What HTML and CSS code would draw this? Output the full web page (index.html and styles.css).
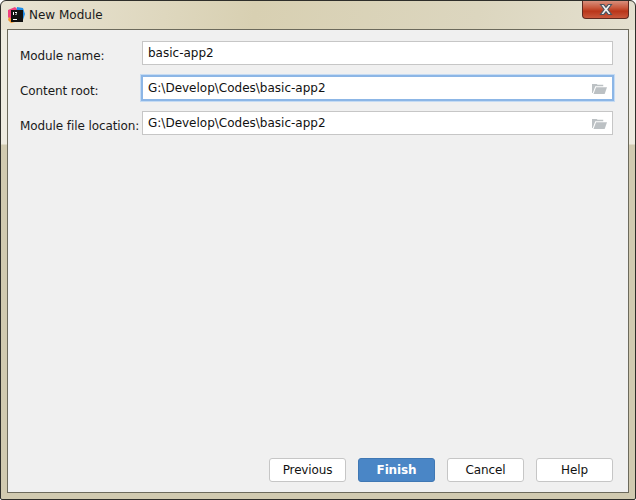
FILE: index.html
```html
<!DOCTYPE html>
<html>
<head>
  <title>New Module</title>
  <link rel="stylesheet" href="styles.css">
</head>
<body>
  <div class="window">
    <div class="titlebar">
      <svg class="app-icon" width="17" height="16" viewBox="0 0 17 16">
        <path d="M0 3 L7 0 L10 3 L3 15 L0 10 Z" fill="#f0407e"/>
        <path d="M9 0 L15 1 L17 7 L15 13 L8 8 Z" fill="#1f8ce8"/>
        <path d="M1 10 L7 15 L3 16 L0 13 Z" fill="#f59a2c"/>
        <rect x="3" y="3" width="12" height="12" fill="#111"/>
        <path d="M5 5 H6 V8 H5 Z M7 5 H9 V6 H8.5 V8 H7 V7.4 H8 V6 H7 Z" fill="#fff"/>
        <rect x="5" y="12" width="4" height="1" fill="#fff"/>
      </svg>
      <span class="title-text">New Module</span>
      <div class="close-btn">
        <svg width="14" height="11" viewBox="1 0.5 12 10">
          <path d="M2 1 L5 1 L7 3.5 L9 1 L12 1 L8.7 5.5 L12 10 L9 10 L7 7.5 L5 10 L2 10 L5.3 5.5 Z" fill="#f2f2f2" stroke="#4a5560" stroke-width="1"/>
        </svg>
      </div>
    </div>
    <div class="panel">
      <div class="form">
        <label class="form-label">Module name:</label>
        <div class="field"><span>basic-app2</span></div>

        <label class="form-label">Content root:</label>
        <div class="field focused">
          <span>G:\Develop\Codes\basic-app2</span>
          <svg class="folder" width="15" height="11" viewBox="0 0 16 12" preserveAspectRatio="none">
            <path d="M0 1 H5 L6 2 H12 V3.5 H3.5 L0.8 11 H0 Z" fill="#bcc1c4"/>
            <path d="M4.3 4.5 H16 L13.5 12 H1.6 Z" fill="#bcc1c4"/>
          </svg>
        </div>

        <label class="form-label">Module file location:</label>
        <div class="field">
          <span>G:\Develop\Codes\basic-app2</span>
          <svg class="folder" width="15" height="11" viewBox="0 0 16 12" preserveAspectRatio="none">
            <path d="M0 1 H5 L6 2 H12 V3.5 H3.5 L0.8 11 H0 Z" fill="#bcc1c4"/>
            <path d="M4.3 4.5 H16 L13.5 12 H1.6 Z" fill="#bcc1c4"/>
          </svg>
        </div>
      </div>

      <div class="buttons">
        <button class="btn">Previous</button>
        <button class="btn primary">Finish</button>
        <button class="btn">Cancel</button>
        <button class="btn">Help</button>
      </div>
    </div>
  </div>
</body>
</html>
```

FILE: styles.css
```css
html, body {
  margin: 0;
  padding: 0;
  background: #fff;
}

.window {
  box-sizing: border-box;
  width: 636px;
  height: 500px;
  display: flex;
  flex-direction: column;
  border: 1px solid #2e2e2a;
  border-radius: 6px 6px 2px 2px;
  background:
    linear-gradient(100deg, #e9e4d4 0, #d8d0b2 40%, #dcd6bf 75%, #e4e0cf 100%) top / 100% 29px no-repeat,
    linear-gradient(#eeebe0 0, #eeebe0 143px, #d1cab0 144px, #d1cab0 100%);
  font-family: "DejaVu Sans", sans-serif;
  font-size: 12px;
  color: #111;
  overflow: hidden;
}

.titlebar {
  height: 28px;
  flex: none;
  display: flex;
  align-items: flex-start;
  padding-left: 7px;
}

.app-icon {
  margin-top: 6px;
}

.title-text {
  margin-left: 4px;
  margin-top: 7px;
  color: #1a1a1a;
}

.close-btn {
  margin-left: auto;
  margin-right: 6px;
  width: 47px;
  height: 18px;
  display: flex;
  align-items: center;
  justify-content: center;
  box-sizing: border-box;
  border: 1px solid #5e2a20;
  border-top: none;
  border-radius: 0 0 4px 4px;
  background: linear-gradient(#d98f7c 0, #c9583c 40%, #b9361a 60%, #c9583c 100%);
}

.panel {
  flex: 1;
  display: flex;
  flex-direction: column;
  margin: 0 6px 6px 6px;
  padding: 11px 15px 10px 12px;
  border: 1px solid #6c6a5c;
  background: #f0f0f0;
}

.form {
  display: grid;
  grid-template-columns: 122px 1fr;
  row-gap: 11px;
  align-items: center;
}

.form-label {
  padding-top: 6px;
  color: #1a1a1a;
  letter-spacing: -0.09px;
}

.field {
  box-sizing: border-box;
  height: 24px;
  display: flex;
  align-items: center;
  justify-content: space-between;
  padding: 0 5px;
  background: #fff;
  border: 1px solid #c6c6c6;
}

.field.focused {
  border-color: #8cb6e6;
  box-shadow: 0 0 0 1px #8cb6e6, 0 0 0 2px #c5dbf3;
}

.buttons {
  margin-top: auto;
  display: flex;
  justify-content: flex-end;
  gap: 12px;
}

.btn {
  box-sizing: border-box;
  width: 77px;
  height: 24px;
  padding: 0;
  font-family: inherit;
  font-size: 12px;
  letter-spacing: -0.15px;
  color: #111;
  background: #fff;
  border: 1px solid #c6c6c6;
  border-radius: 3px;
}

.btn.primary {
  background: #4a86c6;
  border-color: #4078b4;
  color: #fff;
  font-weight: bold;
}
```
